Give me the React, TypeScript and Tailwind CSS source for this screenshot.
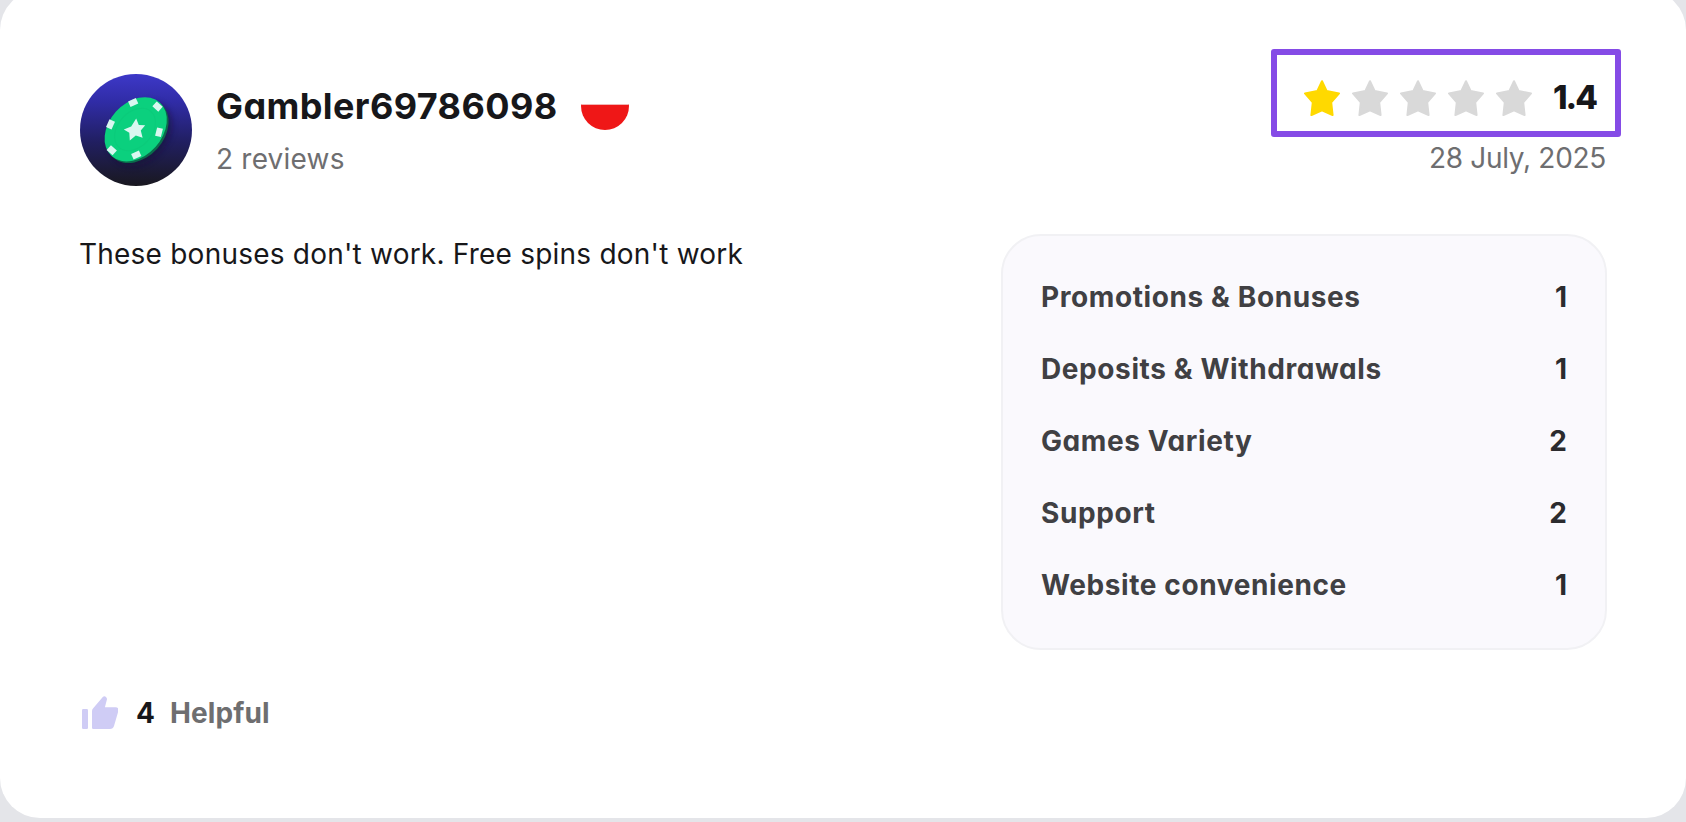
interface Score {
  label: string;
  value: number;
}

const SCORES: Score[] = [
  { label: 'Promotions & Bonuses', value: 1 },
  { label: 'Deposits & Withdrawals', value: 1 },
  { label: 'Games Variety', value: 2 },
  { label: 'Support', value: 2 },
  { label: 'Website convenience', value: 1 },
];

function Avatar() {
  return (
    <svg viewBox="0 0 112 112" className="size-28 shrink-0">
      <defs>
        <linearGradient id="avatarBg" x1="0" y1="0" x2="0" y2="1">
          <stop offset="0" stopColor="#3d38c8" />
          <stop offset="0.25" stopColor="#302ca6" />
          <stop offset="0.6" stopColor="#211f62" />
          <stop offset="1" stopColor="#19181f" />
        </linearGradient>
        <filter id="chipShadow" x="-30%" y="-30%" width="160%" height="160%">
          <feGaussianBlur stdDeviation="3" />
        </filter>
      </defs>
      <circle cx="56" cy="56" r="56" fill="url(#avatarBg)" />
      <ellipse cx="61" cy="60" rx="36" ry="26" transform="rotate(-48 61 60)" fill="#121038" opacity="0.55" filter="url(#chipShadow)" />
      <ellipse cx="57.5" cy="57" rx="36" ry="26.5" transform="rotate(-48 57.5 57)" fill="#0b6a4b" />
      <ellipse cx="55.7" cy="55.3" rx="36" ry="26.5" transform="rotate(-48 55.7 55.3)" fill="#0bd07e" />
      <ellipse cx="55" cy="55.5" rx="24" ry="17" transform="rotate(-48 55 55.5)" fill="none" stroke="#0bcb7b" strokeWidth="1" />
      <g fill="#d9f7f0">
        <rect x="49" y="25.5" width="8.5" height="6" transform="rotate(-24 53.3 28.7)" />
        <rect x="73.5" y="29.5" width="8" height="6.5" transform="rotate(42 77.7 32.7)" />
        <rect x="76" y="54" width="6" height="8.5" transform="rotate(14 79 58.3)" />
        <rect x="52" y="78" width="8.5" height="6" transform="rotate(-24 56.3 81)" />
        <rect x="27.7" y="73" width="8" height="6.5" transform="rotate(42 31.7 76.3)" />
        <rect x="27.5" y="46" width="6" height="8.5" transform="rotate(24 30.3 50.3)" />
      </g>
      <path
        d="M56.2 44.6L58.8 51L65.2 51.2L60.8 56.5L62.6 63.8L55.8 61.6L49.8 66.6L49.3 58.7L43.8 55.4L51.2 52.4Z"
        fill="#d9f7f0"
      />
    </svg>
  );
}

function Flag() {
  return (
    <div className="size-12 overflow-hidden rounded-full bg-white">
      <div className="mt-[22px] h-[26px] border-t border-[#f3b4b4] bg-[#ef1717]" />
    </div>
  );
}

function Star({ filled }: { filled: boolean }) {
  return (
    <svg viewBox="0 0 36 36" className={`size-9 ${filled ? 'text-[#ffd900]' : 'text-[#d9d9d9]'}`}>
      <path
        d="M18 1.2L22.6 11L35 13.4L27.2 22.4L28.6 35L18 30.3L7.4 35L8.8 22.4L1 13.4L13.4 11Z"
        fill="currentColor"
        stroke="currentColor"
        strokeWidth="2"
        strokeLinejoin="round"
      />
    </svg>
  );
}

function ThumbUp() {
  return (
    <svg viewBox="0 0 36 34" className="h-[34px] w-9 text-[#cfccf5]" fill="currentColor">
      <path d="M1.2 13H4.8Q6 13 6 14.2V31.8Q6 33 4.8 33H1.2Q0 33 0 31.8V14.2Q0 13 1.2 13Z" />
      <path d="M10 15Q10 13.4 11.2 12.3L20.8 1Q22.4 -0.5 24.2 1.2Q25.4 2.5 24.8 4L22.9 11.2H33.5Q37.4 11.6 36.2 15.6L32 30Q31.1 33 28 33H11.3Q10 33 10 31.7Z" />
    </svg>
  );
}

export default function App() {
  return (
    <div className="h-[822px] overflow-hidden bg-[#e4e5e9] font-['Inter',sans-serif] text-[28px] leading-10 text-[#17171a] [font-feature-settings:'cv11']">
      <div className="-mt-2.5 h-[828px] rounded-[40px] bg-white px-20 pt-21">
        <header className="flex h-28 justify-between">
          <div className="flex gap-6">
            <Avatar />
            <div className="pt-2">
              <div className="flex h-12 items-center">
                <h2 className="w-[365px] text-[36px] font-bold tracking-[0.4px]">Gambler69786098</h2>
                <Flag />
              </div>
              <p className="mt-[9px] tracking-[0.2px] text-[#6e6e70]">2 reviews</p>
            </div>
          </div>

          <div className="flex flex-col items-end">
            <div className="relative mr-[9px] flex h-12 items-center">
              {/* highlight frame around the rating */}
              <div className="absolute -top-[25px] -right-6 h-[88px] w-[350px] rounded-[3px] border-6 border-[#854be6]" />
              <div className="flex gap-3">
                {[1, 2, 3, 4, 5].map((n) => (
                  <Star key={n} filled={n <= 1} />
                ))}
              </div>
              <span className="-mt-0.5 ml-[21px] w-11 text-[33px] font-extrabold tracking-[-2px]">1.4</span>
            </div>
            <p className="mt-4 tracking-[-0.3px] text-[#6e6e70]">28 July, 2025</p>
          </div>
        </header>

        <div className="mt-12 flex items-start justify-between">
          <p className="-ml-px tracking-[0.22px]">These bonuses don't work. Free spins don't work</p>
          <div className="-mr-px flex h-[416px] w-[606px] flex-col gap-8 rounded-[40px] border-2 border-[#f1f1f4] bg-[#faf9fd] px-[38px] pt-[41px]">
            {SCORES.map((s) => (
              <div key={s.label} className="flex justify-between font-bold">
                <span className="tracking-[0.6px] text-[#404043]">{s.label}</span>
                <span className="text-[#2b2b2e]">{s.value}</span>
              </div>
            ))}
          </div>
        </div>

        <footer className="mt-[43px] flex items-center pl-0.5 font-bold">
          <ThumbUp />
          <span className="ml-[18px] w-[34px]">4</span>
          <span className="tracking-[0.1px] text-[#6e6e70]">Helpful</span>
        </footer>
      </div>
    </div>
  );
}
